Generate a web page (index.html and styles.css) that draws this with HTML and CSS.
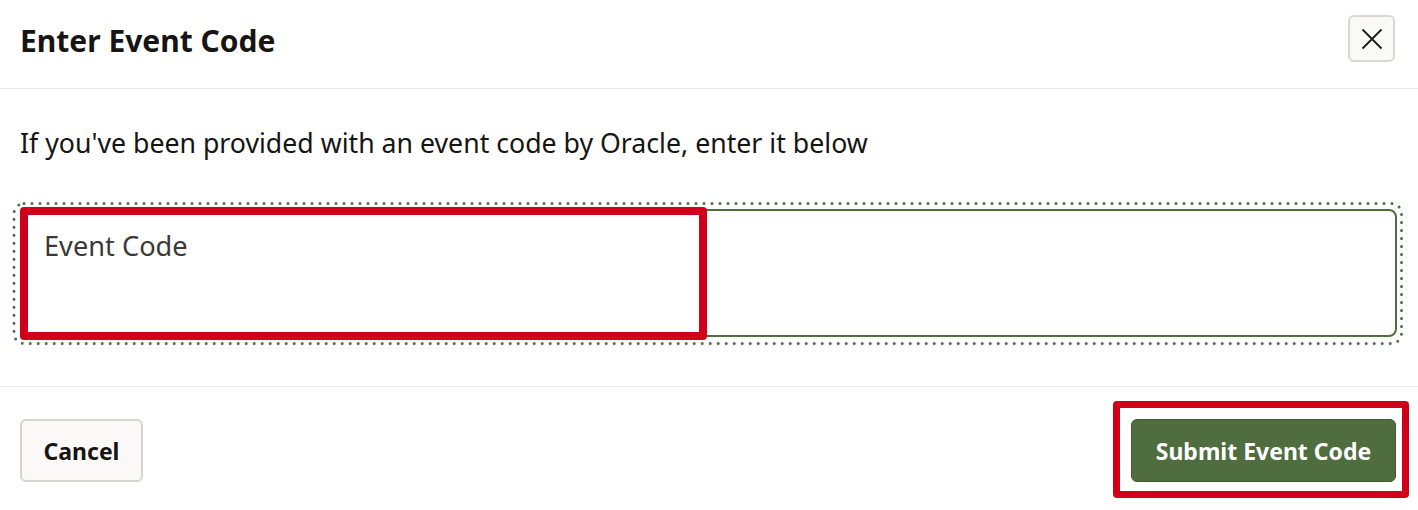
FILE: index.html
```html
<!DOCTYPE html>
<html lang="en">
<head>
<meta charset="utf-8">
<title>Enter Event Code</title>
<link rel="stylesheet" href="styles.css">
</head>
<body>
<div class="dialog">
  <header class="dlg-header">
    <h1 class="dlg-title">Enter Event Code</h1>
    <button class="close-btn" aria-label="Close">
      <svg width="22" height="22" viewBox="0 0 22 22"><path d="M1.5 1.5 L20.5 20.5 M20.5 1.5 L1.5 20.5" stroke="#1a1a1a" stroke-width="1.8" fill="none"/></svg>
    </button>
  </header>
  <section class="dlg-body">
    <p class="intro">If you've been provided with an event code by Oracle, enter it below</p>
    <div class="field-wrap">
      <svg class="focus-ring" width="1393" height="145" viewBox="0 0 1393 145">
        <rect x="2" y="2.5" width="1387.5" height="140" rx="10" ry="10" fill="none" stroke="#4f6d3f" stroke-width="3" stroke-linecap="round" stroke-dasharray="0 8"/>
      </svg>
      <div class="field">
        <span class="field-label">Event Code</span>
      </div>
      <div class="annot annot-field"></div>
    </div>
  </section>
  <footer class="dlg-footer">
    <button class="btn btn-cancel">Cancel</button>
    <div class="submit-wrap">
      <button class="btn btn-submit">Submit Event Code</button>
      <div class="annot annot-submit"></div>
    </div>
  </footer>
</div>
</body>
</html>
```
FILE: styles.css
```css
* { box-sizing: border-box; }
html, body { margin: 0; padding: 0; background: #fff; }
body {
  font-family: "Noto Sans", "Open Sans", "Liberation Sans", sans-serif;
  color: #161513;
  width: 1418px;
  height: 510px;
  overflow: hidden;
}
.dialog { width: 1418px; }
.dlg-header {
  height: 89px;
  border-bottom: 1px solid #e9e8e6;
  display: flex;
  align-items: flex-start;
  justify-content: space-between;
  padding: 0 23px 0 20px;
}
.dlg-title {
  margin: 0;
  margin-top: 21px;
  font-size: 30px;
  font-weight: 700;
  line-height: 40px;
  color: #161513;
}
.close-btn {
  margin-top: 15px;
  width: 47px;
  height: 47px;
  border: 2px solid #d9d8d5;
  border-radius: 6px;
  background: #fbf9f8;
  display: flex;
  align-items: center;
  justify-content: center;
  padding: 0;
}
.dlg-body {
  padding: 35px 21px 0 20px;
  height: 298px;
  border-bottom: 1px solid #e9e8e6;
}
.intro {
  margin: 0;
  font-size: 26.7px;
  line-height: 38px;
  color: #161513;
}
.field-wrap {
  position: relative;
  margin-top: 47px;
}
.focus-ring {
  position: absolute;
  left: -8px;
  top: -8px;
  pointer-events: none;
}
.field {
  height: 128px;
  border: 2px solid #4f6d3f;
  border-radius: 8px;
  padding: 16px 22px;
}
.field-label {
  font-size: 27.2px;
  line-height: 38px;
  color: #3a3937;
}
.annot {
  position: absolute;
  border: 8px solid #d1001a;
  border-radius: 4px;
  pointer-events: none;
}
.annot-field {
  left: 0;
  top: -2px;
  width: 687px;
  height: 133px;
}
.dlg-footer {
  display: flex;
  justify-content: space-between;
  align-items: flex-start;
  padding: 32px 22px 0 20px;
}
.btn {
  font-family: inherit;
  font-size: 23px;
  font-weight: 700;
  height: 63px;
  border-radius: 6px;
  cursor: pointer;
}
.btn-cancel {
  width: 123px;
  background: #fbf9f8;
  border: 2px solid #d5d4d1;
  color: #161513;
}
.submit-wrap { position: relative; }
.btn-submit {
  width: 265px;
  background: #4f6d3f;
  border: 1px solid #3f5a31;
  color: #fff;
}
.annot-submit {
  left: -18px;
  top: -18px;
  width: 296px;
  height: 97px;
  border-width: 7px;
}
```
